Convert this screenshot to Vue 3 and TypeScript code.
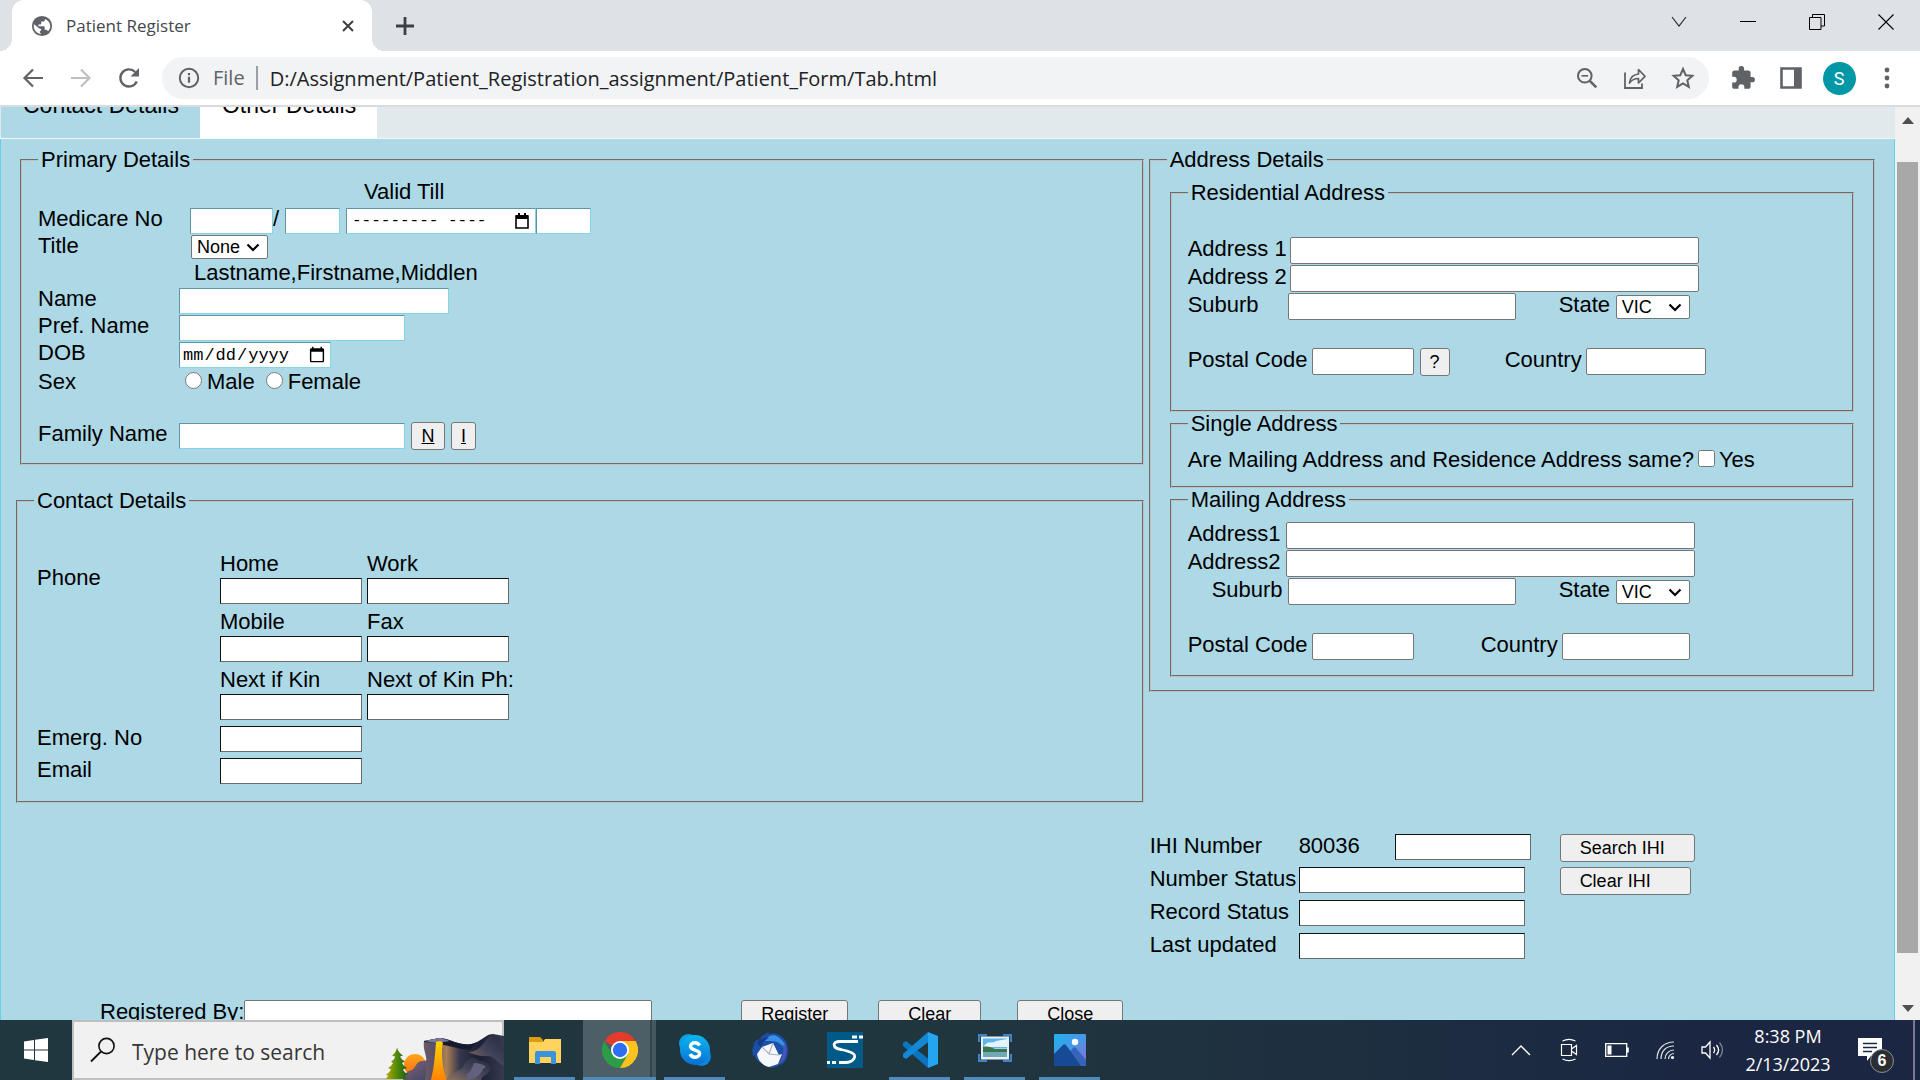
<script setup lang="ts">
import { ref } from 'vue'

interface AppIcon {
  name: string
  running: boolean
  active?: boolean
}

const title = ref('None')
const titles = ['None', 'Mr', 'Mrs', 'Ms', 'Dr']
const states = ['VIC', 'NSW', 'QLD', 'SA', 'TAS', 'WA']
const resState = ref('VIC')
const mailState = ref('VIC')

const phones = [
  { id: 'home', label: 'Home' },
  { id: 'work', label: 'Work' },
  { id: 'mobile', label: 'Mobile' },
  { id: 'fax', label: 'Fax' },
  { id: 'kin', label: 'Next if Kin' },
  { id: 'kinph', label: 'Next of Kin Ph:' },
]

const apps: AppIcon[] = [
  { name: 'File Explorer', running: true },
  { name: 'Chrome', running: true, active: true },
  { name: 'Skype', running: true },
  { name: 'Thunderbird', running: false },
  { name: 'SourceTree', running: false },
  { name: 'VS Code', running: true },
  { name: 'Snip', running: true },
  { name: 'Photos', running: true },
]
</script>

<template>
  <div class="screen">
    <header class="tabstrip">
      <div class="btab">
        <svg width="22" height="22" viewBox="0 0 24 24"><path fill="#5f6368" d="M12 1a11 11 0 1 0 0 22 11 11 0 0 0 0-22zm-1 19.900c-4.500-.5-8-4.300-8-8.900 0-.7.1-1.300.2-1.900L6.500 12.500 8 14c.8.9 1.500 1.200 3 1.200v1.800c-1.200.2-1.600 1-1.200 2.200zM18.500 17.800c-.4-1.200-1.200-1.800-2.700-1.800h-.9v-2.700c0-.6-.4-1-1-1H8.200v-2h2c.6 0 1-.5 1-1V7.200h2c1.200 0 2-.9 2-2v-.9c3.400 1.300 5.800 4.300 5.800 7.700 0 2.200-.9 4.200-2.500 5.800z"/></svg>
        <span class="btab-title">Patient Register</span>
        <button class="plain" aria-label="Close tab"><svg width="12" height="12" viewBox="0 0 12 12"><path d="M1 1l10 10M11 1L1 11" stroke="#3c4043" stroke-width="2"/></svg></button>
      </div>
      <button class="plain newtab" aria-label="New tab"><svg width="18" height="18" viewBox="0 0 18 18"><path d="M9 0v18M0 9h18" stroke="#3c4043" stroke-width="2.800"/></svg></button>
      <div class="spacer"></div>
      <button class="plain win" aria-label="Search tabs"><svg width="16" height="16" viewBox="0 0 16 16"><path d="M1 3l7 9 7-9" fill="none" stroke="#222" stroke-width="1.100"/></svg></button>
      <button class="plain win" aria-label="Minimize"><svg width="16" height="16" viewBox="0 0 16 16"><path d="M0 7.500h16" stroke="#000"/></svg></button>
      <button class="plain win" aria-label="Restore"><svg width="16" height="16" viewBox="0 0 16 16"><path d="M.5 3.500h11.500v12H.5zM3.500 3.500v-3h12v11.500H12" fill="none" stroke="#000"/></svg></button>
      <button class="plain win" aria-label="Close"><svg width="16" height="16" viewBox="0 0 16 16"><path d="M.5.5l15 15M15.500.5l-15 15" stroke="#000" stroke-width="1.100"/></svg></button>
    </header>

    <div class="toolbar">
      <button class="plain tool" aria-label="Back"><svg width="22" height="22" viewBox="0 0 22 22"><path d="M21 11H3M11 2.500L2.500 11l8.500 8.500" fill="none" stroke="#5f6368" stroke-width="2.200"/></svg></button>
      <button class="plain tool" aria-label="Forward"><svg width="22" height="22" viewBox="0 0 22 22"><path d="M1 11h18M11 2.500l8.500 8.500-8.500 8.500" fill="none" stroke="#bdc1c6" stroke-width="2.200"/></svg></button>
      <button class="plain tool" aria-label="Reload"><svg width="22" height="22" viewBox="0 0 22 22"><path d="M18.800 14.500A8.600 8.600 0 1 1 17.200 5" fill="none" stroke="#5f6368" stroke-width="2.400"/><path d="M21 1v8.500h-8.500z" fill="#5f6368"/></svg></button>
      <div class="omnibox">
        <svg width="22" height="22" viewBox="0 0 22 22"><circle cx="11" cy="11" r="9.200" fill="none" stroke="#5f6368" stroke-width="2"/><path d="M11 9.800v6M11 6v2.200" stroke="#5f6368" stroke-width="2.200"/></svg>
        <span class="scheme">File</span>
        <input class="url" aria-label="Address" value="D:/Assignment/Patient_Registration_assignment/Patient_Form/Tab.html" />
        <button class="plain tool" aria-label="Zoom"><svg width="22" height="22" viewBox="0 0 22 22"><circle cx="8.800" cy="8.800" r="6.800" fill="none" stroke="#5f6368" stroke-width="2"/><path d="M13.800 13.800l6.500 6.500" stroke="#5f6368" stroke-width="2.600"/><path d="M5.500 8.800h6.600" stroke="#5f6368" stroke-width="1.600"/></svg></button>
        <button class="plain tool" aria-label="Share"><svg width="24" height="24" viewBox="0 0 24 24"><path d="M2 6.500V22h17v-4.500" fill="none" stroke="#5f6368" stroke-width="1.800"/><path d="M6.500 17c.6-5.500 3.800-8.500 9-9V3.500l6.500 6.800-6.500 6.700v-4.500c-4.200 0-6.800 1.400-9 4.500z" fill="none" stroke="#5f6368" stroke-width="1.700" stroke-linejoin="round"/></svg></button>
        <button class="plain tool" aria-label="Bookmark"><svg width="24" height="24" viewBox="0 0 24 24"><path d="M12 3l2.700 6.200 6.700.6-5.100 4.500 1.500 6.600L12 17.400l-5.800 3.500 1.500-6.600-5.100-4.500 6.700-.6z" fill="none" stroke="#5f6368" stroke-width="2"/></svg></button>
      </div>
      <button class="plain tool" aria-label="Extensions"><svg width="26" height="26" viewBox="0 0 24 24"><path fill="#5f6368" d="M20.500 11H19V7c0-1.100-.9-2-2-2h-4V3.500a2.500 2.500 0 0 0-5 0V5H4c-1.100 0-2 .9-2 2v3.800h1.500a2.700 2.700 0 0 1 0 5.400H2V20c0 1.100.9 2 2 2h3.800v-1.500a2.700 2.700 0 0 1 5.400 0V22H17c1.100 0 2-.9 2-2v-4h1.500a2.500 2.500 0 0 0 0-5z"/></svg></button>
      <button class="plain tool" aria-label="Side panel"><svg width="22" height="22" viewBox="0 0 22 22"><path d="M1.500 1.500h19v19h-19z" fill="#fff" stroke="#5f6368" stroke-width="2.600"/><path d="M14 1h7v20h-7z" fill="#5f6368"/></svg></button>
      <button class="plain tool" aria-label="Profile"><span class="avatar">S</span></button>
      <button class="plain tool" aria-label="Menu"><svg width="6" height="22" viewBox="0 0 6 22"><circle cx="3" cy="3" r="2.400" fill="#5f6368"/><circle cx="3" cy="11" r="2.400" fill="#5f6368"/><circle cx="3" cy="19" r="2.400" fill="#5f6368"/></svg></button>
    </div>

    <div class="viewport">
      <main class="page">
        <nav class="tabs">
          <button class="tablink current">Contact Details</button>
          <button class="tablink">Other Details</button>
        </nav>
        <form class="panel" @submit.prevent>
          <div class="col">
            <fieldset class="primary">
              <legend>Primary Details</legend>
              <div class="row valid">Valid Till</div>
              <div class="row">
                <label class="lead wide" for="medicare">Medicare No</label>
                <input id="medicare" class="w83 blue" type="text" />
                <span class="slash">/</span>
                <input class="w55 blue" type="text" aria-label="Reference" />
                <input class="month blue" type="text" aria-label="Valid till" placeholder="--------- ----" />
                <input class="w55 blue" type="text" aria-label="Check" />
              </div>
              <div class="row">
                <label class="lead wide" for="title">Title</label>
                <select id="title" v-model="title" class="title"><option v-for="t in titles" :key="t">{{ t }}</option></select>
              </div>
              <div class="row hint">Lastname,Firstname,Middlen</div>
              <div class="row">
                <label class="lead" for="name">Name</label>
                <input id="name" class="w270 blue" type="text" />
              </div>
              <div class="row">
                <label class="lead" for="pref">Pref. Name</label>
                <input id="pref" class="w226 blue" type="text" />
              </div>
              <div class="row">
                <label class="lead" for="dob">DOB</label>
                <input id="dob" class="date blue" type="date" />
              </div>
              <div class="row sex">
                <span class="lead">Sex</span>
                <input id="male" type="radio" name="sex" /><label for="male">Male</label>
                <input id="female" type="radio" name="sex" /><label for="female">Female</label>
              </div>
              <div class="row">
                <label class="lead" for="family">Family Name</label>
                <input id="family" class="w226 blue" type="text" />
                <button class="btn n"><u>N</u></button>
                <button class="btn i"><u>I</u></button>
              </div>
            </fieldset>

            <fieldset class="contact">
              <legend>Contact Details</legend>
              <div class="contact-grid">
                <span class="phone">Phone</span>
                <div v-for="p in phones" :key="p.id" class="cell">
                  <label :for="p.id">{{ p.label }}</label>
                  <input :id="p.id" class="dark" type="text" />
                </div>
                <label class="first" for="emerg">Emerg. No</label>
                <input id="emerg" class="dark" type="text" />
                <label class="first" for="email">Email</label>
                <input id="email" class="dark" type="text" />
              </div>
            </fieldset>

            <div class="actions">
              <label for="registered">Registered By:</label>
              <input id="registered" class="by" type="text" />
              <button class="btn register">Register</button>
              <button class="btn clear">Clear</button>
              <button class="btn close">Close</button>
            </div>
          </div>

          <div class="col side">
            <fieldset class="address">
              <legend>Address Details</legend>
              <fieldset class="residential">
                <legend>Residential Address</legend>
                <div class="row"><label class="w102" for="ra1">Address 1</label><input id="ra1" class="line" type="text" /></div>
                <div class="row"><label class="w102" for="ra2">Address 2</label><input id="ra2" class="line" type="text" /></div>
                <div class="row">
                  <label class="w100" for="rsub">Suburb</label><input id="rsub" class="w228" type="text" />
                  <label class="state" for="rstate">State</label>
                  <select id="rstate" v-model="resState"><option v-for="s in states" :key="s">{{ s }}</option></select>
                </div>
                <div class="row postal">
                  <label class="w124" for="rpost">Postal Code</label><input id="rpost" class="w102" type="text" />
                  <button class="btn help">?</button>
                  <label class="country" for="rcountry">Country</label><input id="rcountry" class="w120" type="text" />
                </div>
              </fieldset>
              <fieldset class="single">
                <legend>Single Address</legend>
                <div class="same">
                  <span>Are Mailing Address and Residence Address same?</span>
                  <input id="same" type="checkbox" /><label for="same">Yes</label>
                </div>
              </fieldset>
              <fieldset class="mailing">
                <legend>Mailing Address</legend>
                <div class="row"><label class="w98" for="ma1">Address1</label><input id="ma1" class="line" type="text" /></div>
                <div class="row"><label class="w98" for="ma2">Address2</label><input id="ma2" class="line" type="text" /></div>
                <div class="row">
                  <label class="w100 indent" for="msub">Suburb</label><input id="msub" class="w228" type="text" />
                  <label class="state" for="mstate">State</label>
                  <select id="mstate" v-model="mailState"><option v-for="s in states" :key="s">{{ s }}</option></select>
                </div>
                <div class="row postal">
                  <label class="w124" for="mpost">Postal Code</label><input id="mpost" class="w102" type="text" />
                  <label class="country far" for="mcountry">Country</label><input id="mcountry" class="w128" type="text" />
                </div>
              </fieldset>
            </fieldset>

            <div class="ihi">
              <div class="ihi-row">
                <label class="ihi-label" for="ihi">IHI Number</label>
                <span class="prefix">80036</span>
                <input id="ihi" class="w136 dark" type="text" />
                <button class="btn search-ihi">Search IHI</button>
              </div>
              <div class="ihi-row">
                <label class="ihi-label" for="nstatus">Number Status</label>
                <input id="nstatus" class="w226 dark" type="text" />
                <button class="btn clear-ihi">Clear IHI</button>
              </div>
              <div class="ihi-row"><label class="ihi-label" for="rstatus">Record Status</label><input id="rstatus" class="w226 dark" type="text" /></div>
              <div class="ihi-row"><label class="ihi-label" for="updated">Last updated</label><input id="updated" class="w226 dark" type="text" /></div>
            </div>
          </div>
        </form>
      </main>
      <div class="scrollbar">
        <svg width="12" height="7" viewBox="0 0 12 7"><path d="M0 7l6-7 6 7z" fill="#505050"/></svg>
        <div class="thumb"></div>
        <svg width="12" height="7" viewBox="0 0 12 7"><path d="M0 0l6 7 6-7z" fill="#505050"/></svg>
      </div>
    </div>

    <footer class="taskbar">
      <button class="plain start" aria-label="Start"><svg width="24" height="24" viewBox="0 0 24 24"><path fill="#fff" d="M0 3.400l10-1.400v9.500H0zM11 1.800L24 0v11.500H11zM0 12.500h10V22L0 20.600zM11 12.500h13V24l-13-1.800z"/></svg></button>
      <div class="search">
        <svg width="26" height="26" viewBox="0 0 26 26"><circle cx="16.500" cy="9" r="7.600" fill="none" stroke="#111" stroke-width="1.600"/><path d="M11 14.500L1 24.500" stroke="#111" stroke-width="1.800"/></svg>
        <input type="text" aria-label="Search" placeholder="Type here to search" />
        <svg class="scene" width="120" height="46" viewBox="0 0 120 46">
          <defs>
            <linearGradient id="sun" x1="0" y1="0" x2="0" y2="1"><stop offset="0" stop-color="#ffa714"/><stop offset="1" stop-color="#ff6b1c"/></linearGradient>
            <linearGradient id="fall" x1="0" y1="0" x2="0" y2="1"><stop offset="0" stop-color="#ffd400"/><stop offset="1" stop-color="#ff8205"/></linearGradient>
            <linearGradient id="rock"><stop offset="0" stop-color="#6b5a63"/><stop offset=".15" stop-color="#56506a"/><stop offset=".28" stop-color="#ab8058"/><stop offset=".45" stop-color="#34364c"/><stop offset=".7" stop-color="#1c2034"/><stop offset="1" stop-color="#353a50"/></linearGradient>
            <linearGradient id="ridge" x1="0" y1="1" x2="1" y2="0"><stop offset="0" stop-color="#94755d"/><stop offset=".5" stop-color="#42445c"/><stop offset="1" stop-color="#23283c"/></linearGradient>
            <linearGradient id="hill" x1="0" y1="0" x2="1" y2="1"><stop offset="0" stop-color="#8a6672"/><stop offset="1" stop-color="#3d4468"/></linearGradient>
            <linearGradient id="tree"><stop offset="0" stop-color="#b9a800"/><stop offset=".5" stop-color="#4f8a0a"/><stop offset="1" stop-color="#1d5a16"/></linearGradient>
          </defs>
          <circle cx="31" cy="31" r="11" fill="url(#sun)"/>
          <path d="M19 46c1-7 5-9 9-10 3-1 4-9 10-9l8-1v20z" fill="url(#hill)"/>
          <path d="M40 7c8-1 12-3 17-3 8 1 14 5 22 6 6 1 10 0 14-2 6-3 10-8 16-8l11 2v44H41c1-12 2-16 1-23-1-6-3-9-2-16z" fill="url(#rock)"/>
          <path d="M40 7c8-1 12-3 17-3 8 1 14 5 22 6 6 1 10 0 14-2l-7 8c-14-1-28-7-46-8z" fill="#171b2e"/>
          <path d="M40 7c8-1 12-3 17-3l9 3-14 2z" fill="#777c9b"/>
          <path d="M84 18c12 0 15-10 23-17 5 4 10 9 13 18v13c-7-3-9-11-19-10-7 0-12-2-17-4z" fill="url(#ridge)"/>
          <path d="M52 8c3-1 6-1 7 1-2 5-1 27 4 37H47c3-12 4-25 5-38z" fill="url(#fall)"/>
          <path d="M62 46c4-8 12-8 16-12 3-4 4-9 11-10 4 0 5 3 9 3 6 1 9 5 8 9-1 5-8 5-9 10z" fill="url(#ridge)"/>
          <path d="M83 40c4-2 5-7 7-11 5 0 9 1 12 4-4 1-3 5-7 8-3 2-5 4-12 5z" fill="#62617c"/>
          <path d="M13 13.500c1 4 3 6 6 8l-3 1c1 2 3 4 5 5l-3 1.500c1 2 3 4 5 5l-4 1.500c1 2 3 4 5 5l-3 1 2 3.500H2l2-3.500-2-1c2-1 4-3 5-5l-3-1.500c2-1 4-3 5-5l-2-1.500c2-1 4-3 4-5l-3-1c3-2 4-4 5-8z" fill="url(#tree)"/>
        </svg>
      </div>

      <div class="apps">
        <button v-for="a in apps" :key="a.name" class="plain app" :class="{ running: a.running, active: a.active }" :aria-label="a.name">
          <svg v-if="a.name === 'File Explorer'" width="36" height="36" viewBox="0 0 36 36"><path d="M2 5h11l3 3v5H2z" fill="#e09a10"/><path d="M2 10h14l2-3h16v24H2z" fill="#ffd35c"/><path d="M8 31V21a2 2 0 0 1 2-2h17a2 2 0 0 1 2 2v11h-5v-7H13v7H8z" fill="#3b93dd"/></svg>
          <svg v-else-if="a.name === 'Chrome'" width="36" height="36" viewBox="0 0 36 36"><path d="M18 18L2.400 9A18 18 0 0 1 33.600 9z" fill="#e33b2e"/><path d="M18 18l7.800 4.500L18 36A18 18 0 0 1 2.400 9l7.800 13.500z" fill="#2c9c46"/><path d="M18 9h15.600A18 18 0 0 1 18 36l7.800-13.500z" fill="#fcc31e"/><circle cx="18" cy="18" r="9" fill="#fff"/><circle cx="18" cy="18" r="7.200" fill="#2d6ff0"/></svg>
          <svg v-else-if="a.name === 'Skype'" width="36" height="36" viewBox="0 0 36 36"><defs><linearGradient id="sky" x1="0" y1="0" x2="0" y2="1"><stop offset="0" stop-color="#0cb7f0"/><stop offset="1" stop-color="#0870d4"/></linearGradient></defs><circle cx="11.500" cy="11.500" r="9.500" fill="#0a9de8"/><circle cx="24.500" cy="24.500" r="9.500" fill="#0a84de"/><circle cx="18" cy="18" r="15" fill="url(#sky)"/><path d="M22.500 13.500c-1-2-2.700-2.700-4.700-2.700-2.600 0-4.300 1.300-4.300 3.500 0 4.800 9.100 2.700 9.100 7.300 0 2.300-2 3.600-4.500 3.600s-4.100-1-5-3.200" fill="none" stroke="#fff" stroke-width="3.400"/></svg>
          <svg v-else-if="a.name === 'Thunderbird'" width="36" height="36" viewBox="0 0 36 36"><path d="M10 4c3-2 5-3 7-4l-1 2c12-3 20 6 20 16 0 8-3 13-8 16l2-4c-4 5-9 7-14 5l2-1C9 33 3 28 3 23l-2 1c-1-4-1-9 2-12l-2 0c2-3 4-4 7-5z" fill="#1c4fa8"/><path d="M13 9c3-6 9-7 13-4 6 4 9 9 8 15-3-8-9-11-15-11z" fill="#3a8ee6"/><path d="M5 11c2-4 7-6 12-5-5 2-7 5-8 10z" fill="#163a86"/><path d="M34 13c2 8-1 16-8 20 4-6 6-12 5-20z" fill="#4a53b8"/><path d="M10 15l11-4 6 12 3-1-4 10-9 3C11 34 6 29 5 22z" fill="#f6f7fb"/><path d="M10 15l7 7 4-11M17 22l10 1" fill="none" stroke="#a9b1c6" stroke-width="1.200"/></svg>
          <svg v-else-if="a.name === 'SourceTree'" width="36" height="36" viewBox="0 0 36 36"><path d="M0 0h36v36H0z" fill="#005a87"/><path d="M31 9.500H13c-9 0-7 7 1 8 9 2 16 4 13 9-2 3.500-6 4-9 4H12" fill="none" stroke="#fff" stroke-width="2.800"/><path d="M25 5h5M32 5h4M0 30.500h3M5 30.500h4" stroke="#fff" stroke-width="3"/></svg>
          <svg v-else-if="a.name === 'VS Code'" width="36" height="36" viewBox="0 0 36 36"><path d="M1 11l3-2 25 20-3 7L1 14z" fill="#0a76c2"/><path d="M1 25l3 2L29 8l-3-8L1 22z" fill="#1288d6"/><path d="M26 0l10 4v28l-10 4z" fill="#25a5ee"/></svg>
          <svg v-else-if="a.name === 'Snip'" class="raised" width="34" height="28" viewBox="0 0 34 28"><path d="M1 8V1h8M25 1h8v7M33 20v7h-8M9 27H1v-7" fill="none" stroke="#3c84c6" stroke-width="2.400"/><path d="M3 2.500h28v23H3z" fill="#e6f0f6"/><path d="M5 4.500h24v10H5z" fill="#5fb4ee"/><path d="M6 12c4-6 9-2 12-5l11-2v8H6z" fill="#e5f4fc"/><path d="M5 13c5-1 8 0 12 2h12v4H5z" fill="#39764b"/><path d="M5 18h24v5H5z" fill="#6ea9b4"/></svg>
          <svg v-else width="34" height="34" viewBox="0 0 34 34"><defs><linearGradient id="pic" x1="0" y1="0" x2="1" y2="1"><stop offset="0" stop-color="#21b1ee"/><stop offset=".5" stop-color="#4797e8"/><stop offset="1" stop-color="#8f6bd0"/></linearGradient></defs><rect x="1" y="1" width="32" height="32" rx="1" fill="url(#pic)"/><path d="M12 24l8-9c1-1 2-1 3 0l10 12v6H12z" fill="#3564b8"/><path d="M1 21l9-9c1-1 2-1 3 0l15 21H1z" fill="#174a94"/><circle cx="22" cy="9" r="3.200" fill="#fff"/></svg>
        </button>
      </div>
      <div class="spacer"></div>
      <div class="tray">
        <svg width="20" height="12" viewBox="0 0 20 12"><path d="M1 11l9-9 9 9" fill="none" stroke="#fff" stroke-width="1.400"/></svg>
        <svg width="18" height="24" viewBox="0 0 18 24"><path d="M1.500 6.500h10v11h-10zM11.500 11l5-3.500v9l-5-3.500M2.500 3c4-2 9-2 13 0M2.500 21c4 2 9 2 13 0" fill="none" stroke="#fff" stroke-width="1.200"/></svg>
        <svg width="24" height="14" viewBox="0 0 24 14"><path d="M.7.7h21v12.600H.7z" fill="none" stroke="#fff" stroke-width="1.300"/><path d="M2.500 2.500h4v9h-4zM22 4.500h1.800v5H22z" fill="#fff"/></svg>
        <svg width="20" height="20" viewBox="0 0 20 20"><path d="M2 19C2 9 9 2 19 2M6 19C6 11 11 6 19 6M10 19c0-5 4-9 9-9M13.500 19c0-3 2.500-5.500 5.500-5.500" fill="none" stroke="#dfe3ea" stroke-width="1.200"/><circle cx="17.500" cy="17.500" r="1.600" fill="#fff"/></svg>
        <svg width="24" height="20" viewBox="0 0 24 20"><path d="M1 7h3.500L9 2v16l-4.500-5H1z" fill="none" stroke="#fff" stroke-width="1.300"/><path d="M12.500 7c1.500 2 1.500 4 0 6M15.500 5c2.500 3 2.500 7 0 10" fill="none" stroke="#fff" stroke-width="1.300"/><path d="M18.500 2.500c4 5 4 10 0 15" fill="none" stroke="#7b8598" stroke-width="1.300"/></svg>
      </div>
      <div class="clock"><span>8:38 PM</span><span>2/13/2023</span></div>
      <button class="plain notes" aria-label="Notifications">
        <svg width="24" height="24" viewBox="0 0 24 24"><path d="M0 0h24v18H13l-4 5v-5H0z" fill="#fff"/><path d="M5 5.500h14M5 9.500h14M5 13.500h9" stroke="#1b2741" stroke-width="1.300"/></svg>
        <span class="count">6</span>
      </button>
      <div class="peek"></div>
    </footer>
  </div>
</template>

<style>
html,
body {
  margin: 0;
  overflow: hidden;
}
</style>

<style scoped>
* {
  box-sizing: border-box;
}
.screen {
  display: flex;
  flex-direction: column;
  height: 100vh;
  overflow: hidden;
  font-family: "Liberation Sans", Arial, sans-serif;
}
svg {
  display: block;
  flex: none;
}
.plain {
  display: flex;
  align-items: center;
  justify-content: center;
  padding: 0;
  border: 0;
  background: none;
}
.spacer {
  flex: 1;
}

/* Browser frame */
.tabstrip {
  display: flex;
  flex: none;
  height: 51px;
  padding-left: 12px;
  background: #dee1e6;
}
.btab {
  position: relative;
  display: flex;
  align-items: center;
  width: 360px;
  padding: 0 18px 0 19px;
  border-radius: 12px 12px 0 0;
  background: #fff;
}
.btab::before,
.btab::after {
  content: "";
  position: absolute;
  bottom: 0;
  width: 12px;
  height: 12px;
}
.btab::before {
  left: -12px;
  background: radial-gradient(circle at 0 0, #dee1e6 12px, #fff 12px);
}
.btab::after {
  right: -12px;
  background: radial-gradient(circle at 100% 0, #dee1e6 12px, #fff 12px);
}
.btab-title {
  flex: 1;
  margin-left: 13px;
  font: 17px/24px "Open Sans", "Noto Sans", sans-serif;
  color: #45484c;
}
.newtab {
  width: 66px;
}
.win {
  width: 69px;
  height: 43px;
}
.toolbar {
  display: flex;
  flex: none;
  align-items: center;
  height: 56px;
  padding: 0 9px;
  border-bottom: 2px solid #d9dbde;
  background: #fff;
}
.tool {
  flex: none;
  width: 48px;
  height: 42px;
}
.omnibox {
  display: flex;
  flex: 1;
  align-items: center;
  height: 42px;
  margin: 0 10px 0 9px;
  padding: 0 2px 0 16px;
  border-radius: 21px;
  background: #f1f3f4;
}
.scheme {
  margin-left: 13px;
  padding-right: 11px;
  border-right: 2px solid #9aa0a6;
  font: 20px/24px "Open Sans", "Noto Sans", sans-serif;
  color: #5f6368;
}
.url {
  flex: 1;
  min-width: 0;
  padding: 2px 0 0 12px;
  border: 0;
  outline: 0;
  background: none;
  font: 20px/28px "Open Sans", "Noto Sans", sans-serif;
  color: #202124;
}
.avatar {
  width: 33px;
  height: 33px;
  border-radius: 50%;
  background: #0097a7;
  font: 18px/33px Roboto, sans-serif;
  color: #fff;
}

/* Page */
.viewport {
  display: flex;
  flex: 1;
  min-height: 0;
  overflow: hidden;
  background: #add8e6;
}
.page {
  flex: 1;
  min-width: 0;
  overflow: hidden;
  font-size: 22px;
  line-height: 24px;
  white-space: nowrap;
}
.tabs {
  display: flex;
  align-items: flex-end;
  height: 32px;
  padding-left: 1px;
  overflow: hidden;
  border-bottom: 1px solid #f1f7f9;
  background: #e1e9ec;
}
.tablink {
  flex: none;
  padding: 0 21px 20px 22px;
  border: 0;
  background: #fff;
  font: 23px/26px "Liberation Sans", Arial, sans-serif;
  color: #000;
}
.tablink.current {
  background: #add8e6;
}
.panel {
  display: grid;
  grid-template-columns: minmax(0, 31fr) minmax(0, 20fr);
  padding: 9px 16px 0 12px;
  border: 1px solid #62d0ea;
  border-width: 0 1px;
}
.side {
  margin-left: -1px;
}
fieldset {
  min-width: 0;
  margin: 0 3px;
  padding: 0 16px;
  border: 2px groove #c0c0c0;
}
legend {
  padding: 0 3px;
}
input,
select,
.btn {
  flex: none;
  font: 18px/21px "Liberation Sans", Arial, sans-serif;
  color: #000;
}
input[type="text"],
input[type="date"] {
  height: 27px;
  padding: 0 3px;
  border: 1px solid #767676;
  border-radius: 2px;
  background: #fff;
}
input.blue,
input.dark {
  height: 26px;
  border-radius: 0;
}
input.blue {
  border-color: #5c96a8 #86d3e6 #86d3e6 #5c96a8;
}
input.dark {
  border-color: #111 #6b6b6b #6b6b6b #111;
}
input[type="radio"],
input[type="checkbox"] {
  width: 17px;
  height: 17px;
  margin: 2px 4px 0 0;
}
select {
  appearance: none;
  width: 74px;
  height: 24px;
  padding: 0 5px;
  border: 1px solid #767676;
  border-radius: 2px;
  background: #fff url("data:image/svg+xml,%3Csvg xmlns='http://www.w3.org/2000/svg' width='14' height='9'%3E%3Cpath d='M1.500 1.500L7 7l5.500-5.500' fill='none' stroke='black' stroke-width='2.200'/%3E%3C/svg%3E") no-repeat right 7px center;
}
.btn {
  height: 28px;
  padding: 0;
  border: 1px solid #767676;
  border-radius: 3px;
  background: #efefef;
}
.row {
  display: flex;
  align-items: flex-start;
  height: 28px;
}
.w55 { width: 55px; }
.w83 { width: 83px; }
.w98 { width: 98px; }
.w100 { width: 100px; }
.w102 { width: 102px; }
.w120 { width: 120px; }
.w124 { width: 124px; }
.w128 { width: 128px; }
.w136 { width: 136px; }
.w226 { width: 226px; }
.w228 { width: 228px; }
.w270 { width: 270px; }
.line { width: 409px; }

.primary {
  margin-left: 7px;
  padding-top: 8px;
  padding-bottom: 14px;
}
.primary .row {
  height: 27px;
}
.primary .row.hint {
  height: 26px;
  padding-left: 156px;
}
.primary .row > input,
.primary .row > select {
  margin-top: 1px;
}
.lead {
  width: 141px;
}
.lead.wide {
  width: 152px;
}
.row.valid {
  padding-left: 326px;
}
.slash {
  width: 12px;
}
.primary .row > .month {
  width: 190px;
  margin-left: 6px;
  padding-left: 5px;
  background: #fff url("data:image/svg+xml,%3Csvg xmlns='http://www.w3.org/2000/svg' width='14' height='16'%3E%3Cpath d='M1 3h12v12H1z' fill='none' stroke='black' stroke-width='1.600'/%3E%3Cpath d='M1 2h12v4H1zM3 0h2v3H3zM9 0h2v3H9z'/%3E%3C/svg%3E") no-repeat right 6px center;
  font-family: "Liberation Mono", monospace;
  font-size: 16px;
}
.month::placeholder {
  color: #000;
  opacity: 1;
}
.row > .date {
  width: 152px;
  padding: 0 2px;
  font-family: "Liberation Mono", monospace;
  font-size: 17px;
}
.date::-webkit-calendar-picker-indicator {
  width: 18px;
  height: 18px;
}
.row > .title {
  width: 77px;
  margin-left: 1px;
}
.primary .sex {
  height: 54px;
  padding-top: 2px;
}
.primary .sex > input {
  margin: 2px 5px 0 6px;
}
.primary .sex > label {
  margin-right: 5px;
}
.n {
  width: 34px;
  margin-left: 6px;
}
.i {
  width: 25px;
  margin-left: 6px;
}

.contact {
  margin-top: 24px;
  padding-top: 39px;
  padding-bottom: 17px;
}
.contact-grid {
  display: grid;
  grid-template-columns: 178px 142px 142px;
  gap: 6px 5px;
  padding-left: 3px;
}
.contact-grid > .first,
.contact-grid > .phone {
  grid-column: 1;
}
.contact-grid > .phone {
  align-self: center;
}
.cell {
  display: flex;
  flex-direction: column;
}
.cell:nth-child(even) {
  grid-column: 2;
}
.cell label {
  height: 26px;
}

.actions {
  display: flex;
  align-items: flex-start;
  margin-top: 197px;
  padding-left: 87px;
}
.by {
  width: 408px;
}
.register {
  width: 107px;
  margin-left: 89px;
}
.clear {
  width: 103px;
  margin-left: 30px;
}
.close {
  width: 106px;
  margin-left: 36px;
}

.address {
  padding-top: 9px;
  padding-bottom: 13px;
}
.residential {
  padding-top: 32px;
  padding-bottom: 34px;
}
.state {
  width: 57px;
  margin-left: 43px;
}
.row .indent {
  padding-left: 24px;
}
.row.postal {
  margin-top: 27px;
}
.row > select {
  margin-top: 2px;
}
.help {
  width: 30px;
  margin-left: 6px;
}
.country {
  width: 81px;
  margin-left: 55px;
}
.country.far {
  margin-left: 67px;
}
.single {
  padding-top: 12px;
  padding-bottom: 14px;
}
.same {
  display: flex;
}
.same > input {
  margin-left: 4px;
}
.mailing {
  padding-top: 10px;
  padding-bottom: 14px;
}
.ihi {
  display: grid;
  gap: 7px;
  margin-top: 142px;
  padding-left: 4px;
}
.ihi-row {
  display: flex;
  height: 26px;
}
.ihi-label {
  width: 149px;
}
.prefix {
  width: 96px;
}
.search-ihi,
.clear-ihi {
  padding-left: 19px;
  text-align: left;
}
.search-ihi {
  width: 135px;
  margin-left: 29px;
}
.clear-ihi {
  width: 131px;
  margin-left: 35px;
}

.scrollbar {
  display: flex;
  flex: none;
  flex-direction: column;
  align-items: center;
  width: 25px;
  padding: 10px 0 8px;
  background: #f1f1f1;
}
.thumb {
  flex: 1;
  width: 21px;
  margin: 38px 0 52px;
  background: #a8a8a8;
}

/* Taskbar */
.taskbar {
  display: flex;
  flex: none;
  height: 60px;
  background: linear-gradient(90deg, #20373f, #20363f 50%, #1e2f40 70%, #1b2742 88%);
  font-family: "Open Sans", "Noto Sans", sans-serif;
  color: #fff;
}
.start {
  width: 72px;
}
.search {
  position: relative;
  display: flex;
  align-items: center;
  width: 432px;
  padding-left: 16px;
  border: 2px solid #bfbfbf;
  background: #f1f1f1;
}
.search > input[type="text"] {
  width: 240px;
  height: 42px;
  padding: 3px 0 0 16px;
  border: 0;
  outline: 0;
  background: none;
  font: 21px/30px "Open Sans", "Noto Sans", sans-serif;
}
.search > input::placeholder {
  color: #363636;
  opacity: 1;
}
.scene {
  position: absolute;
  right: -2px;
  bottom: -2px;
}
.apps {
  display: flex;
  margin-left: 3px;
}
.app {
  position: relative;
  width: 75px;
}
.app.active {
  padding: 0 1px;
  background: linear-gradient(90deg, #4c5f66 67px, #33464d 67px, #33464d 69px, #46575e 69px) content-box;
}
.app.running::after {
  content: "";
  position: absolute;
  right: 7px;
  bottom: 0;
  left: 7px;
  height: 3px;
  background: #5089ba;
}
.app.active::after {
  right: 1px;
  left: 1px;
}
.raised {
  margin-bottom: 4px;
}
.tray {
  display: grid;
  grid-template-columns: repeat(5, 48px);
  align-items: center;
  justify-items: center;
}
.clock {
  display: flex;
  flex-direction: column;
  justify-content: center;
  width: 114px;
  padding-right: 12px;
  font-size: 18px;
  line-height: 28px;
  text-align: center;
}
.notes {
  position: relative;
  width: 62px;
  padding-right: 24px;
  color: #fff;
}
.count {
  position: absolute;
  top: 29px;
  left: 19px;
  width: 24px;
  height: 24px;
  border: 1px solid #8a8d92;
  border-radius: 50%;
  background: #2b2e33;
  font-size: 16px;
  font-weight: 700;
  line-height: 22px;
  text-align: center;
}
.peek {
  width: 7px;
  border-left: 2px solid #737b8c;
}
</style>
